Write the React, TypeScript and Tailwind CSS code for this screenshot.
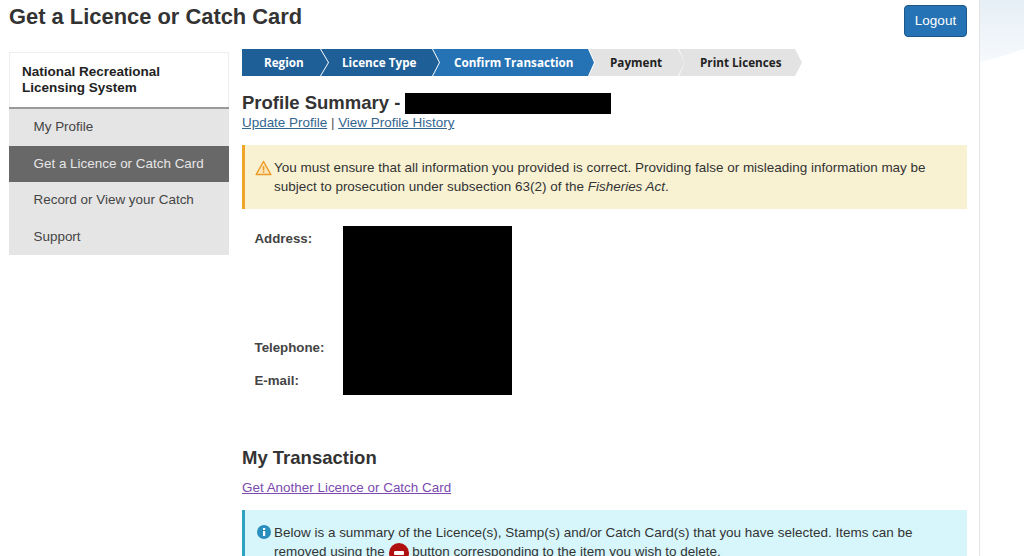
function Step({ label, className }: { label: string; className: string }) {
  return (
    <div className={`flex h-[27px] items-center pt-[1px] font-bold text-[11.7px] [font-family:'Open_Sans',sans-serif] ${className}`}>
      {label}
    </div>
  );
}

export default function App() {
  return (
    <div className="flex h-[556px] w-[1024px] overflow-hidden bg-white text-[#333] [font-family:'Liberation_Sans',Arial,sans-serif]">
      <main className="h-full w-[980px] shrink-0 border-r border-[#e5e5e5] pl-[9px] pr-[12px]">
        <header className="flex h-[52px] items-start justify-between">
          <h1 className="mt-[3px] text-[21.9px] leading-[28px] font-bold text-[#333]">Get a Licence or Catch Card</h1>
          <button className="mt-[5px] h-[32px] w-[63px] rounded-[4px] border border-[#1c578a] bg-[#2572b4] text-[13.5px] text-white">Logout</button>
        </header>
        <div className="flex gap-[13px]">
          <aside className="w-[220px] shrink-0">
            <div className="border border-b-0 border-[#eeeeee] bg-white px-[12px] pt-[11px] pb-[12px] text-[13.5px] leading-[15.5px] font-bold text-[#222]">
              National Recreational<br />Licensing System
            </div>
            <nav className="border-t-2 border-[#9a9a9a] bg-[#e5e5e5] text-[13.45px]">
              <div className="flex h-[36.5px] items-center pl-[24.5px] text-[#444]">My Profile</div>
              <div className="flex h-[36.5px] items-center bg-[#686868] pl-[24.5px] text-[#e6e6e6]">Get a Licence or Catch Card</div>
              <div className="flex h-[36.5px] items-center pl-[24.5px] text-[#444]">Record or View your Catch</div>
              <div className="flex h-[36.5px] items-center pl-[24.5px] text-[#444]">Support</div>
            </nav>
          </aside>
          <section className="min-w-0 flex-1 -mt-[3px]">
            <div className="flex">
              <Step label="Region" className="w-[86px] pl-[22px] text-white bg-[#1f5f98] [clip-path:polygon(0_0,calc(100%-8px)_0,100%_50%,calc(100%-8px)_100%,0_100%)]" />
              <Step label="Licence Type" className="-ml-[7px] w-[118px] pl-[21px] text-white bg-[#1f5f98] [clip-path:polygon(0_0,calc(100%-7px)_0,100%_50%,calc(100%-7px)_100%,0_100%,8px_50%)]" />
              <Step label="Confirm Transaction" className="-ml-[6px] w-[161px] pl-[21px] text-white bg-[#2572b4] [clip-path:polygon(0_0,calc(100%-6px)_0,100%_50%,calc(100%-6px)_100%,0_100%,7px_50%)]" />
              <Step label="Payment" className="-ml-[5px] w-[96px] pl-[21px] text-[#222] bg-[#e3e3e3] [clip-path:polygon(0_0,calc(100%-7px)_0,100%_50%,calc(100%-7px)_100%,0_100%,6px_50%)]" />
              <Step label="Print Licences" className="-ml-[6px] w-[123px] pl-[21px] text-[#222] bg-[#e3e3e3] [clip-path:polygon(0_0,calc(100%-7px)_0,100%_50%,calc(100%-7px)_100%,0_100%,6px_50%)]" />
            </div>
            <div className="mt-[17px] flex h-[21px] items-center">
              <h2 className="pb-[1px] text-[18.5px] leading-[20px] font-bold text-[#333]">Profile Summary -</h2>
              <div className="ml-[5px] h-[21px] w-[206px] bg-black" />
            </div>
            <p className="text-[13.45px] leading-[17px] text-[#555]">
              <a className="text-[#33658f] underline">Update Profile</a> | <a className="text-[#33658f] underline">View Profile History</a>
            </p>
            <div className="mt-[14px] flex h-[64px] border-l-[3px] border-[#f0a428] bg-[#f8f2d3] pl-[10px] pt-[13px]">
              <svg width="17" height="16" viewBox="0 0 17 16" className="mt-[2px] mr-[2px] shrink-0">
                <path d="M8.5 1.5 15.8 14.5H1.2Z" fill="#fbe7b8" stroke="#ec9b27" strokeWidth="1.5" strokeLinejoin="round" />
                <rect x="7.8" y="6" width="1.5" height="4.5" fill="#ec9b27" />
                <rect x="7.8" y="11.2" width="1.5" height="1.5" fill="#ec9b27" />
              </svg>
              <p className="text-[13.47px] leading-[19px] text-[#333]">
                You must ensure that all information you provided is correct. Providing false or misleading information may be subject to prosecution under subsection 63(2) of the <em>Fisheries Act</em>.
              </p>
            </div>
            <div className="mt-[17px] flex">
              <dl className="h-[169px] w-[101px] shrink-0 pl-[12.5px] text-[13.3px] font-bold text-[#444]">
                <dt className="pt-[5px] leading-[16px]">Address:</dt>
                <dt className="pt-[93px] leading-[16px]">Telephone:</dt>
                <dt className="pt-[17px] leading-[16px]">E-mail:</dt>
              </dl>
              <div className="h-[169px] w-[169px] bg-black" />
            </div>
            <h2 className="mt-[51px] text-[18.5px] leading-[24px] font-bold text-[#333]">My Transaction</h2>
            <p className="mt-[9px] text-[13.45px] leading-[17px]">
              <a className="text-[#7b4bb0] underline">Get Another Licence or Catch Card</a>
            </p>
            <div className="relative mt-[14px] h-[70px] border-l-[3px] border-[#2ea3c0] bg-[#d6f6fb] pl-[29px] pt-[13px]">
              <svg width="14" height="14" viewBox="0 0 14 14" className="absolute left-[12px] top-[15px]">
                <circle cx="7" cy="7" r="7" fill="#2b8fbd" />
                <rect x="6" y="6" width="2.2" height="5" fill="#fff" />
                <rect x="6" y="3" width="2.2" height="2" fill="#fff" />
              </svg>
              <p className="text-[13.47px] leading-[19px] text-[#333]">
                Below is a summary of the Licence(s), Stamp(s) and/or Catch Card(s) that you have selected. Items can be removed using the{" "}
                <span className="-my-[6px] inline-flex h-[20px] w-[20px] translate-y-[1px] items-center justify-center rounded-full bg-[#b01010] align-middle">
                  <span className="h-[4px] w-[10px] rounded-[1px] bg-white" />
                </span>{" "}
                button corresponding to the item you wish to delete.
              </p>
            </div>
          </section>
        </div>
      </main>
      <div className="h-full flex-1">
        <svg width="44" height="66" viewBox="0 0 44 66" className="block" aria-hidden="true">
          <defs>
            <linearGradient id="w" x1="0" y1="0" x2="0" y2="1">
              <stop offset="0" stopColor="#e6eff6" />
              <stop offset="1" stopColor="#f6f9fc" />
            </linearGradient>
          </defs>
          <path d="M0 0H44V49C28 54 14 59 0 62Z" fill="url(#w)" />
        </svg>
      </div>
    </div>
  );
}
